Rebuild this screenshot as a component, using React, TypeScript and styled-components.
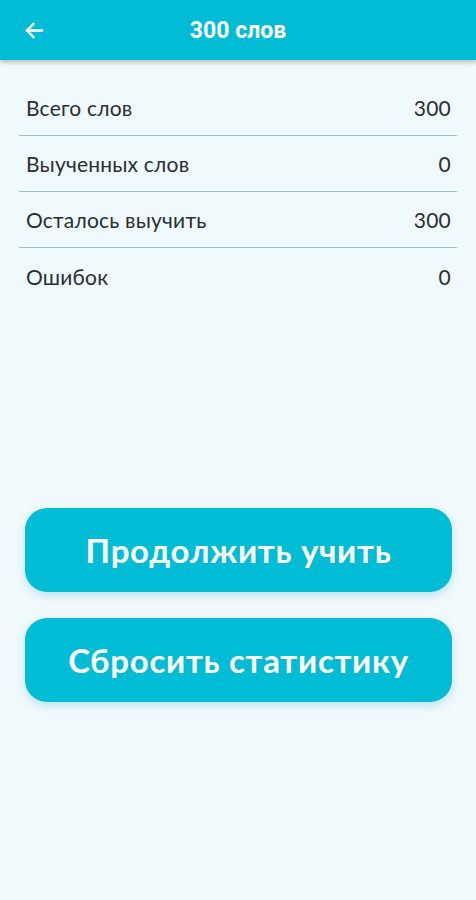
import styled, { createGlobalStyle } from 'styled-components';

const GlobalStyle = createGlobalStyle`
  html, body {
    margin: 0;
    padding: 0;
    background: #f0f9fc;
  }
  body {
    font-family: Lato, "Noto Sans", sans-serif;
  }
`;

const Screen = styled.div`
  width: 476px;
  min-height: 900px;
  background: #f0f9fc;
  display: flex;
  flex-direction: column;
`;

const Header = styled.header`
  height: 60px;
  background: #00bcd4;
  display: flex;
  align-items: center;
  position: relative;
  box-shadow: 0 2px 5px rgba(0, 0, 0, 0.28);
  z-index: 1;
`;

const BackButton = styled.button`
  width: 60px;
  height: 60px;
  border: 0;
  padding: 0;
  background: transparent;
  display: flex;
  align-items: center;
  justify-content: center;
  color: #fff;
  flex-shrink: 0;
  margin-left: 4px;
`;

const Title = styled.h1`
  flex: 1;
  margin: 0 64px 0 0;
  text-align: center;
  color: #fff;
  font-family: Roboto, "Liberation Sans", sans-serif;
  font-weight: 700;
  font-size: 23px;
`;

const StatsList = styled.ul`
  list-style: none;
  margin: 0;
  padding: 20px 19px 0 19px;
`;

const StatRow = styled.li`
  box-sizing: border-box;
  height: 56px;
  display: flex;
  align-items: center;
  justify-content: space-between;
  padding: 0 6px 0 7px;
  font-size: 21px;
  letter-spacing: 0.2px;
  color: #2a2f30;
  border-bottom: 1px solid #9dbfc3;

  &:last-child {
    border-bottom: 0;
  }
`;

const Actions = styled.div`
  display: flex;
  flex-direction: column;
  gap: 26px;
  padding: 0 24px 0 25px;
  margin-top: 204px;
`;

const ActionButton = styled.button`
  height: 84px;
  border: 0;
  border-radius: 22px;
  background: #00bcd4;
  color: #fff;
  font-family: Lato, "Noto Sans", sans-serif;
  font-weight: 700;
  font-size: 33px;
  letter-spacing: 0.7px;
  box-shadow: 0 4px 8px rgba(0, 160, 200, 0.22);
  cursor: pointer;
`;

const stats = [
  { label: 'Всего слов', value: 300 },
  { label: 'Выученных слов', value: 0 },
  { label: 'Осталось выучить', value: 300 },
  { label: 'Ошибок', value: 0 },
];

export default function App() {
  return (
    <>
      <GlobalStyle />
      <Screen>
        <Header>
          <BackButton aria-label="Назад">
            <svg width="23" height="23" viewBox="0 0 24 24" fill="none" stroke="currentColor" strokeWidth="2.5" strokeLinecap="round" strokeLinejoin="round">
              <path d="M20 12H4" />
              <path d="M11 5l-7 7 7 7" />
            </svg>
          </BackButton>
          <Title>300 слов</Title>
        </Header>

        <StatsList>
          {stats.map((s) => (
            <StatRow key={s.label}>
              <span>{s.label}</span>
              <span>{s.value}</span>
            </StatRow>
          ))}
        </StatsList>

        <Actions>
          <ActionButton>Продолжить учить</ActionButton>
          <ActionButton>Сбросить статистику</ActionButton>
        </Actions>
      </Screen>
    </>
  );
}
